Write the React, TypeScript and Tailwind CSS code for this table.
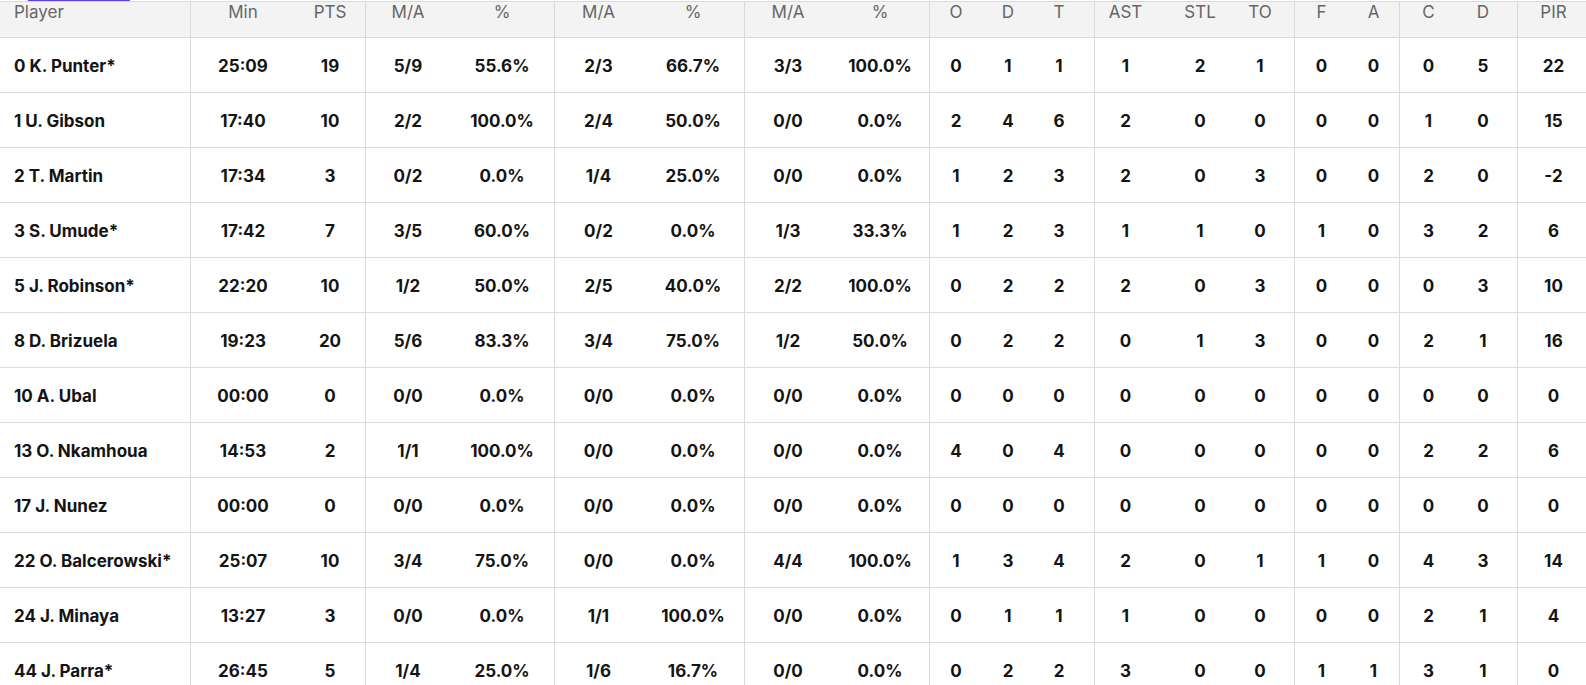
import React from "react";

type Col = {
  label: string;
  width: number;
  group?: boolean; // starts a new group, draws the left rule
  pad?: string;
};

const columns: Col[] = [
  { label: "Player", width: 190 },
  { label: "Min", width: 105, group: true },
  { label: "PTS", width: 70 },
  { label: "M/A", width: 85, group: true },
  { label: "%", width: 104 },
  { label: "M/A", width: 88, group: true },
  { label: "%", width: 102 },
  { label: "M/A", width: 87, group: true },
  { label: "%", width: 98 },
  { label: "O", width: 53, group: true },
  { label: "D", width: 52 },
  { label: "T", width: 60, pad: "pr-[10px]" },
  { label: "AST", width: 62, group: true },
  { label: "STL", width: 88 },
  { label: "TO", width: 50, pad: "pr-[18px]" },
  { label: "F", width: 54, group: true },
  { label: "A", width: 51 },
  { label: "C", width: 58, group: true },
  { label: "D", width: 60, pad: "pr-[8px]" },
  { label: "PIR", width: 69, group: true, pad: "pl-[3px]" },
];

const rows: string[][] = [
  ["0 K. Punter*", "25:09", "19", "5/9", "55.6%", "2/3", "66.7%", "3/3", "100.0%", "0", "1", "1", "1", "2", "1", "0", "0", "0", "5", "22"],
  ["1 U. Gibson", "17:40", "10", "2/2", "100.0%", "2/4", "50.0%", "0/0", "0.0%", "2", "4", "6", "2", "0", "0", "0", "0", "1", "0", "15"],
  ["2 T. Martin", "17:34", "3", "0/2", "0.0%", "1/4", "25.0%", "0/0", "0.0%", "1", "2", "3", "2", "0", "3", "0", "0", "2", "0", "-2"],
  ["3 S. Umude*", "17:42", "7", "3/5", "60.0%", "0/2", "0.0%", "1/3", "33.3%", "1", "2", "3", "1", "1", "0", "1", "0", "3", "2", "6"],
  ["5 J. Robinson*", "22:20", "10", "1/2", "50.0%", "2/5", "40.0%", "2/2", "100.0%", "0", "2", "2", "2", "0", "3", "0", "0", "0", "3", "10"],
  ["8 D. Brizuela", "19:23", "20", "5/6", "83.3%", "3/4", "75.0%", "1/2", "50.0%", "0", "2", "2", "0", "1", "3", "0", "0", "2", "1", "16"],
  ["10 A. Ubal", "00:00", "0", "0/0", "0.0%", "0/0", "0.0%", "0/0", "0.0%", "0", "0", "0", "0", "0", "0", "0", "0", "0", "0", "0"],
  ["13 O. Nkamhoua", "14:53", "2", "1/1", "100.0%", "0/0", "0.0%", "0/0", "0.0%", "4", "0", "4", "0", "0", "0", "0", "0", "2", "2", "6"],
  ["17 J. Nunez", "00:00", "0", "0/0", "0.0%", "0/0", "0.0%", "0/0", "0.0%", "0", "0", "0", "0", "0", "0", "0", "0", "0", "0", "0"],
  ["22 O. Balcerowski*", "25:07", "10", "3/4", "75.0%", "0/0", "0.0%", "4/4", "100.0%", "1", "3", "4", "2", "0", "1", "1", "0", "4", "3", "14"],
  ["24 J. Minaya", "13:27", "3", "0/0", "0.0%", "1/1", "100.0%", "0/0", "0.0%", "0", "1", "1", "1", "0", "0", "0", "0", "2", "1", "4"],
  ["44 J. Parra*", "26:45", "5", "1/4", "25.0%", "1/6", "16.7%", "0/0", "0.0%", "0", "2", "2", "3", "0", "0", "1", "1", "3", "1", "0"],
];

export default function App() {
  return (
    <div className="relative w-[1586px] h-[685px] overflow-hidden bg-white font-['Inter','Liberation_Sans',sans-serif]">
      {/* active tab marker peeking in from above */}
      <div className="absolute left-[28px] top-0 h-px w-[102px] bg-[#5b3df5]" />

      <div className="pt-px">
        <table className="table-fixed border-separate border-spacing-0 w-[1586px] text-[17px]">
          <colgroup>
            {columns.map((c, i) => (
              <col key={i} style={{ width: c.width }} />
            ))}
          </colgroup>
          <thead>
            <tr>
              {columns.map((c, i) => (
                <th
                  key={i}
                  className={`h-[37px] align-top pt-0 bg-[#f3f3f3] border-t border-b border-[#dadada] font-normal text-[#666666] leading-5 ${
                    i === 0 ? "text-left pl-[14px]" : "text-center"
                  } ${c.group ? "border-l" : ""} ${c.pad ?? ""}`}
                >
                  {c.label}
                </th>
              ))}
            </tr>
          </thead>
          <tbody>
            {rows.map((r, ri) => (
              <tr key={ri}>
                {r.map((v, ci) => {
                  const c = columns[ci];
                  return (
                    <td
                      key={ci}
                      className={`h-[55px] pt-[4px] border-b border-[#dadada] font-bold text-[#141414] whitespace-nowrap ${
                        ci === 0 ? "text-left pl-[14px]" : "text-center"
                      } ${c.group ? "border-l" : ""} ${c.pad ?? ""}`}
                    >
                      {v}
                    </td>
                  );
                })}
              </tr>
            ))}
          </tbody>
        </table>
      </div>
    </div>
  );
}
